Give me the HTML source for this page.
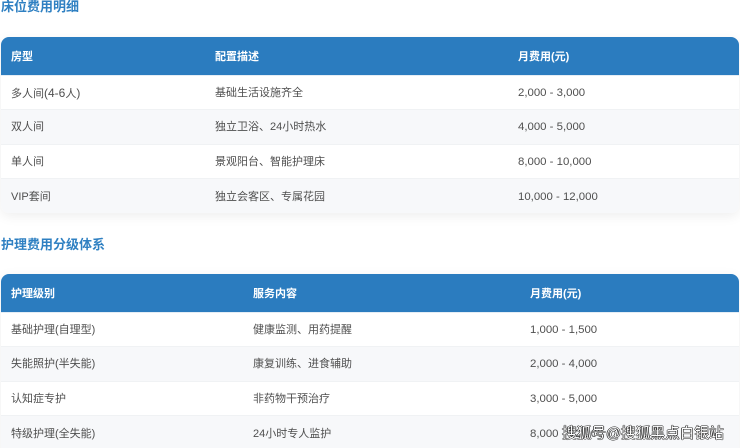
<!DOCTYPE html>
<html lang="zh">
<head>
<meta charset="utf-8">
<style>
html,body{margin:0;padding:0;background:#fff}
body{width:740px;height:448px;overflow:hidden;position:relative;font-family:"Liberation Sans","Noto Sans CJK SC",sans-serif}
#w{position:absolute;left:0;top:0;width:740px;height:448px;overflow:hidden;filter:blur(.3px)}
.h{position:absolute;left:1px;font-size:13px;font-weight:700;color:#2f80c2;line-height:18px;white-space:nowrap}
.t{position:absolute;left:1px;width:738px;border-radius:8px;box-shadow:0 3px 12px rgba(0,0,0,.07);overflow:hidden;background:#fff}
.r{position:relative;height:34.6px;font-size:11px;color:#4f4f4f;border-bottom:1px solid #f0f2f4;box-sizing:border-box}
.r:nth-child(odd){background:#f7f8fa}
.r.hd{height:38.5px;background:#2b7cbf;color:#fff;font-weight:700;border-bottom:1px solid #e4edf5}
.r span{position:absolute;top:.4px;line-height:34.6px;white-space:nowrap}
.r.hd span{line-height:40px;top:0}
.n{font-size:11.4px}
.l{font-size:12px}
.wm{position:absolute;left:562px;top:424.5px;font-size:14.7px;line-height:18px;color:#fff;white-space:nowrap;text-shadow:-.7px 0 0 #222,.7px 0 0 #222,0 -.7px 0 #222,0 .7px 0 #222}
</style>
</head>
<body>
<div id="w">
<div class="h" style="top:-2px">床位费用明细</div>
<div class="t" style="top:37px;height:176px">
  <div class="r hd"><span style="left:10px">房型</span><span style="left:214px">配置描述</span><span style="left:517px">月费用(元)</span></div>
  <div class="r"><span style="left:10px">多人间<i class="l" style="font-style:normal">(4-6</i>人<i class="l" style="font-style:normal">)</i></span><span style="left:214px">基础生活设施齐全</span><span class="n" style="left:517px">2,000 - 3,000</span></div>
  <div class="r"><span style="left:10px">双人间</span><span style="left:214px">独立卫浴、24小时热水</span><span class="n" style="left:517px">4,000 - 5,000</span></div>
  <div class="r"><span style="left:10px">单人间</span><span style="left:214px">景观阳台、智能护理床</span><span class="n" style="left:517px">8,000 - 10,000</span></div>
  <div class="r"><span style="left:10px">VIP套间</span><span style="left:214px">独立会客区、专属花园</span><span class="n" style="left:517px">10,000 - 12,000</span></div>
</div>
<div class="h" style="top:236px">护理费用分级体系</div>
<div class="t" style="top:274px;height:190px">
  <div class="r hd"><span style="left:10px">护理级别</span><span style="left:252px">服务内容</span><span style="left:529px">月费用(元)</span></div>
  <div class="r"><span style="left:10px">基础护理(自理型)</span><span style="left:252px">健康监测、用药提醒</span><span class="n" style="left:529px">1,000 - 1,500</span></div>
  <div class="r"><span style="left:10px">失能照护(半失能)</span><span style="left:252px">康复训练、进食辅助</span><span class="n" style="left:529px">2,000 - 4,000</span></div>
  <div class="r"><span style="left:10px">认知症专护</span><span style="left:252px">非药物干预治疗</span><span class="n" style="left:529px">3,000 - 5,000</span></div>
  <div class="r"><span style="left:10px">特级护理(全失能)</span><span style="left:252px">24小时专人监护</span><span class="n" style="left:529px">8,000 - 12,000</span></div>
</div>
<div class="wm">搜狐号@搜狐黑点白银站</div>
</div>
</body>
</html>
